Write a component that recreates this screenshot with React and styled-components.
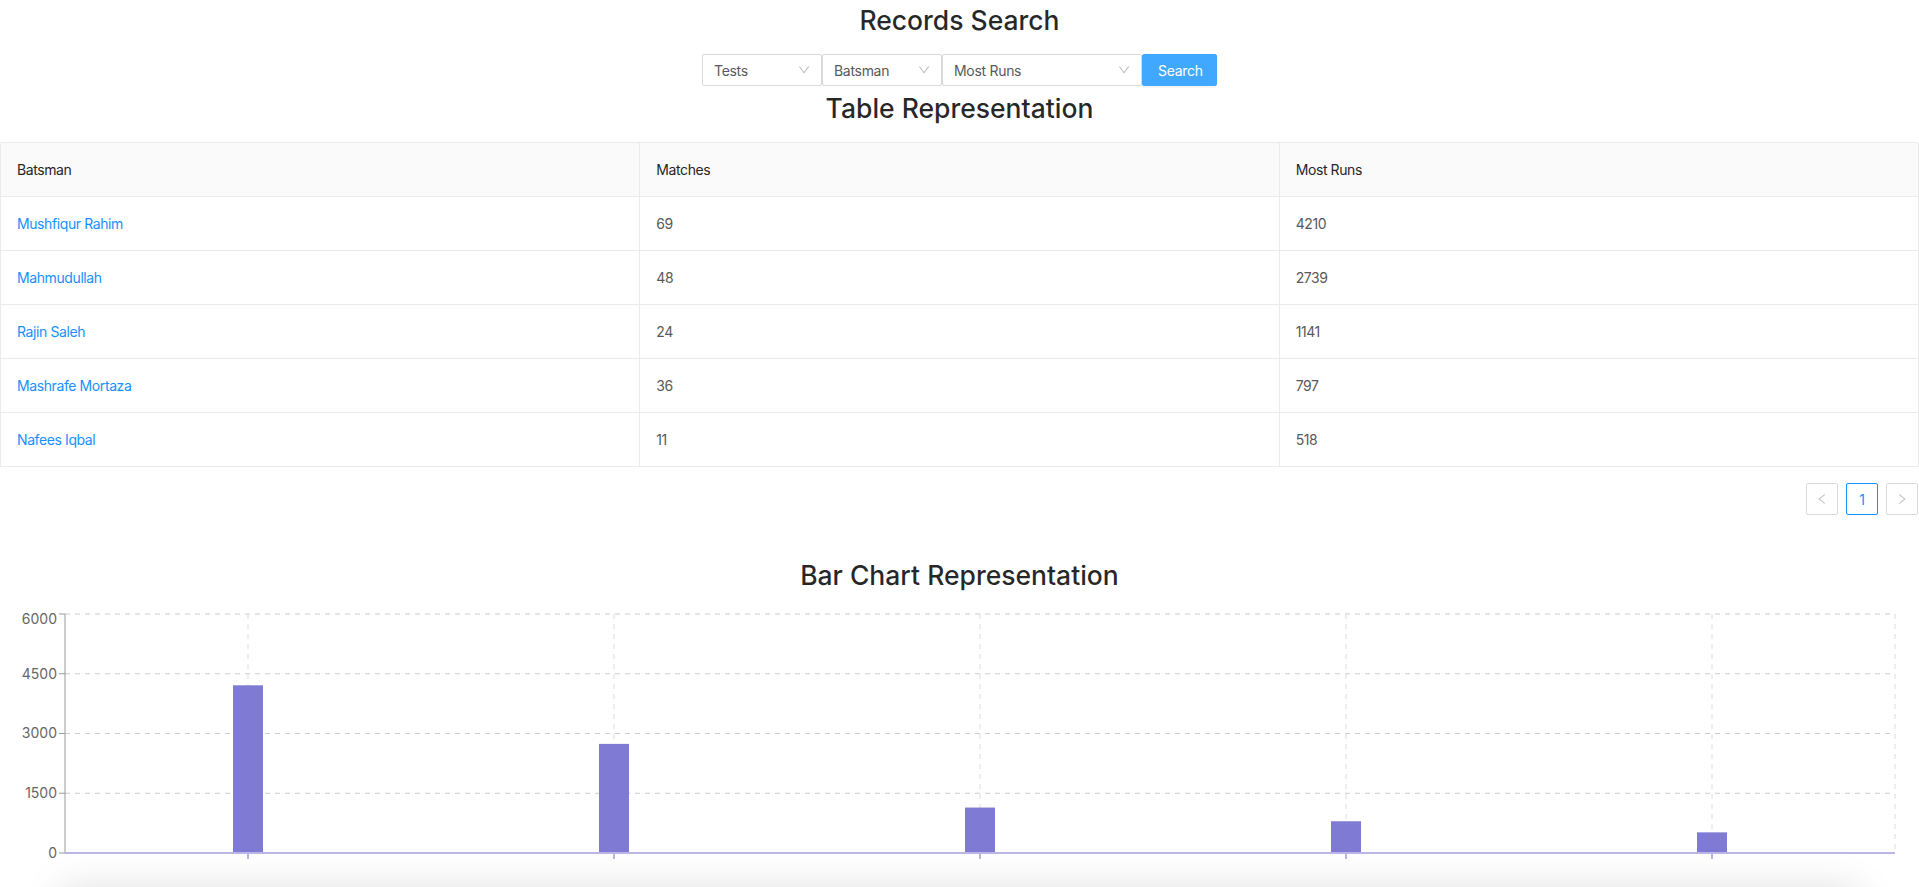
import React from 'react';
import styled, { createGlobalStyle } from 'styled-components';

const GlobalStyle = createGlobalStyle`
  html, body { margin: 0; padding: 0; background: #fff; overflow: hidden; }
  body {
    font-family: Inter, "Noto Sans", "Liberation Sans", sans-serif;
    font-size: 14px;
    color: rgba(0, 0, 0, 0.85);
  }
  * { box-sizing: border-box; }
`;

const records = [
  { name: 'Mushfiqur Rahim', matches: 69, runs: 4210 },
  { name: 'Mahmudullah', matches: 48, runs: 2739 },
  { name: 'Rajin Saleh', matches: 24, runs: 1141 },
  { name: 'Mashrafe Mortaza', matches: 36, runs: 797 },
  { name: 'Nafees Iqbal', matches: 11, runs: 518 },
];

const Page = styled.div`
  display: flex;
  flex-direction: column;
  width: 100%;
`;

const Heading = styled.h2`
  margin: ${(p) => p.$top || 0}px 0 0;
  font-size: 26.5px;
  line-height: 32px;
  font-weight: 500;
  text-align: center;
  color: rgba(0, 0, 0, 0.85);
`;

const SearchBar = styled.div`
  display: flex;
  justify-content: center;
  margin-top: 18px;
`;

const SelectBox = styled.div`
  display: flex;
  align-items: center;
  justify-content: space-between;
  width: ${(p) => p.$w}px;
  height: 32px;
  padding: 0 11px;
  border: 1px solid #d9d9d9;
  border-radius: 2px;
  background: #fff;
  font-size: 14px;
  letter-spacing: -0.3px;
  color: #595959;
`;

const Arrow = styled.svg`
  width: 12px;
  height: 12px;
  fill: rgba(0, 0, 0, 0.25);
`;

const SearchButton = styled.button`
  width: 75px;
  height: 32px;
  padding: 0 15px;
  border: 1px solid #40a9ff;
  border-radius: 2px;
  background: #40a9ff;
  color: #fff;
  font-family: inherit;
  font-size: 14px;
  letter-spacing: -0.3px;
  box-shadow: 0 2px 0 rgba(0, 0, 0, 0.045);
`;

const Table = styled.table`
  width: 100%;
  margin-top: 18px;
  border-collapse: separate;
  border-spacing: 0;
  table-layout: fixed;
  border-top: 1px solid #ebebeb;
  border-left: 1px solid #ebebeb;
  border-radius: 2px 2px 0 0;
`;

const Th = styled.th`
  padding: 16px;
  line-height: 21px;
  background: #fafafa;
  font-weight: 400;
  text-align: left;
  letter-spacing: -0.4px;
  color: #262626;
  border-right: 1px solid #ebebeb;
  border-bottom: 1px solid #ebebeb;
`;

const Td = styled.td`
  padding: 16px;
  line-height: 21px;
  letter-spacing: -0.4px;
  color: #595959;
  border-right: 1px solid #ebebeb;
  border-bottom: 1px solid #ebebeb;
`;

const NameLink = styled.a`
  color: #1890ff;
  text-decoration: none;
`;

const Pager = styled.ul`
  display: flex;
  justify-content: flex-end;
  gap: 8px;
  margin: 16px 1px 0 0;
  padding: 0;
  list-style: none;
`;

const PageItem = styled.li`
  display: flex;
  align-items: center;
  justify-content: center;
  width: 32px;
  height: 32px;
  border: 1px solid ${(p) => (p.$active ? '#1890ff' : '#d9d9d9')};
  border-radius: 2px;
  color: ${(p) => (p.$active ? '#1890ff' : 'rgba(0,0,0,0.25)')};
  font-size: 14px;
`;

const Chart = styled.svg`
  display: block;
  width: 100%;
  height: 270px;
  font-family: Inter, "Noto Sans", "Liberation Sans", sans-serif;
`;

const FooterCard = styled.div`
  height: 200px;
  margin: 30px 60px 0;
  background: #fff;
  border-radius: 8px;
  box-shadow: 0 0 40px rgba(0, 0, 0, 0.15);
`;

const DownIcon = () => (
  <Arrow viewBox="64 64 896 896">
    <path d="M884 256h-75c-5.1 0-9.9 2.5-12.9 6.6L512 654.2 227.9 262.6c-3-4.1-7.8-6.6-12.9-6.6h-75c-6.5 0-10.3 7.4-6.5 11.9L486 746.6c12.8 17.5 38.8 17.5 51.5 0l374.4-478.7c3.9-4.5.1-11.9-6.4-11.9z" />
  </Arrow>
);

const LeftIcon = () => (
  <Arrow viewBox="64 64 896 896">
    <path d="M724 218.3V141c0-6.7-7.7-10.4-12.9-6.3L260.3 486.8a31.86 31.86 0 000 50.3l450.8 352.1c5.3 4.1 12.9.4 12.9-6.3v-77.3c0-4.9-2.3-9.6-6.1-12.6l-360-281 360-281.1c3.8-3 6.1-7.7 6.1-12.6z" />
  </Arrow>
);

const RightIcon = () => (
  <Arrow viewBox="64 64 896 896">
    <path d="M765.7 486.8L314.9 134.7A7.97 7.970 0 00302 141v77.3c0 4.9 2.3 9.6 6.1 12.6l360 281.1-360 281.1c-3.9 3-6.1 7.7-6.1 12.6V883c0 6.7 7.7 10.4 12.9 6.3l450.8-352.1a31.96 31.96 0 000-50.4z" />
  </Arrow>
);

const BarChart = ({ data }) => {
  const left = 65;
  const right = 1895;
  const top = 23;
  const bottom = 262;
  const max = 6000;
  const band = (right - left) / data.length;
  const ticks = [6000, 4500, 3000, 1500, 0];
  const y = (v) => bottom - (v / max) * (bottom - top);
  const centers = data.map((_, i) => left + band * (i + 0.5));

  return (
    <Chart viewBox="0 0 1919 270" preserveAspectRatio="none">
      {ticks.slice(0, 4).map((t) => (
        <line key={t} x1={left} x2={right} y1={y(t)} y2={y(t)} stroke="#ccc" strokeDasharray="5 5" />
      ))}
      {[...centers, right].map((x) => (
        <line key={x} x1={x} x2={x} y1={top} y2={bottom} stroke="#ddd" strokeDasharray="5 5" />
      ))}
      {data.map((d, i) => (
        <rect key={d.name} x={centers[i] - 15} y={y(d.runs)} width={30} height={bottom - y(d.runs)} fill="#7f7ad3" />
      ))}
      <line x1={left} x2={left} y1={top} y2={bottom} stroke="#999" />
      {ticks.map((t, i) => (
        <g key={t}>
          <line x1={left - 6} x2={left} y1={y(t)} y2={y(t)} stroke="#999" />
          <text x={left - 8} y={y(t) + (i === 0 ? 5 : 0)} dy="0.355em" textAnchor="end" fontSize="14" fill="#666">
            {t}
          </text>
        </g>
      ))}
      <line x1={left} x2={right} y1={bottom} y2={bottom} stroke="#b9b6e6" strokeWidth="2" />
      {centers.map((x) => (
        <line key={x} x1={x} x2={x} y1={bottom} y2={bottom + 6} stroke="#b9b6e6" strokeWidth="2" />
      ))}
    </Chart>
  );
};

const App = () => (
  <Page>
    <GlobalStyle />
    <Heading $top={4}>Records Search</Heading>
    <SearchBar>
      <SelectBox $w={120}>
        <span>Tests</span>
        <DownIcon />
      </SelectBox>
      <SelectBox $w={120}>
        <span>Batsman</span>
        <DownIcon />
      </SelectBox>
      <SelectBox $w={200}>
        <span>Most Runs</span>
        <DownIcon />
      </SelectBox>
      <SearchButton>Search</SearchButton>
    </SearchBar>
    <Heading $top={6}>Table Representation</Heading>
    <Table>
      <thead>
        <tr>
          <Th>Batsman</Th>
          <Th>Matches</Th>
          <Th>Most Runs</Th>
        </tr>
      </thead>
      <tbody>
        {records.map((r) => (
          <tr key={r.name}>
            <Td>
              <NameLink href="#">{r.name}</NameLink>
            </Td>
            <Td>{r.matches}</Td>
            <Td>{r.runs}</Td>
          </tr>
        ))}
      </tbody>
    </Table>
    <Pager>
      <PageItem><LeftIcon /></PageItem>
      <PageItem $active>1</PageItem>
      <PageItem><RightIcon /></PageItem>
    </Pager>
    <Heading $top={44}>Bar Chart Representation</Heading>
    <BarChart data={records} />
    <FooterCard />
  </Page>
);

export default App;
